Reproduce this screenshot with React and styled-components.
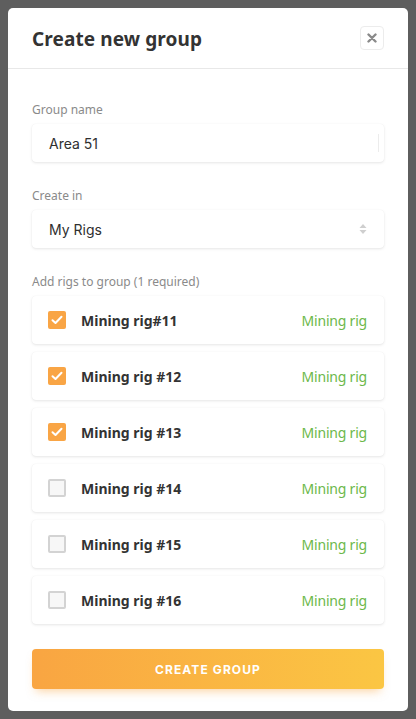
import React from "react";
import styled, { createGlobalStyle } from "styled-components";

const Global = createGlobalStyle`
  html, body { margin: 0; padding: 0; }
  body {
    background: #5e5e5e;
    font-family: "Noto Sans", "DejaVu Sans", sans-serif;
    -webkit-font-smoothing: antialiased;
  }
  * { box-sizing: border-box; }
`;

const Backdrop = styled.div`
  min-height: 719px;
  padding: 8px;
  background: #5e5e5e;
`;

const Modal = styled.div`
  width: 400px;
  height: 703px;
  background: #fff;
  border-radius: 5px;
  display: flex;
  flex-direction: column;
`;

const Header = styled.div`
  height: 61px;
  display: flex;
  align-items: center;
  justify-content: space-between;
  padding: 0 24px 0 24px;
  border-bottom: 1px solid #e8e8e8;
`;

const Title = styled.h2`
  margin: 0;
  font-size: 19px;
  font-weight: 700;
  color: #333;
  letter-spacing: 0.1px;
  margin-top: 1px;
`;

const CloseButton = styled.button`
  width: 24px;
  height: 24px;
  border: 1px solid #ececec;
  border-radius: 4px;
  background: #fff;
  display: flex;
  align-items: center;
  justify-content: center;
  padding: 0;
`;

const Body = styled.div`
  padding: 33px 24px 0 24px;
  display: flex;
  flex-direction: column;
`;

const Label = styled.div`
  font-size: 12px;
  color: #8a8a8a;
  line-height: 16px;
  margin-bottom: 6px;
`;

const Field = styled.div`
  height: 38px;
  background: #fff;
  border-radius: 4px;
  box-shadow: 0 1px 3px rgba(0, 0, 0, 0.1), 0 0 1px rgba(0, 0, 0, 0.06);
  display: flex;
  align-items: center;
  justify-content: space-between;
  padding: 0 16px 0 17px;
  margin-bottom: 26px;
  font-family: Inter, "Noto Sans", sans-serif;
  font-size: 14px;
  color: #2f2f2f;
`;

const Caret = styled.span`
  width: 1px;
  height: 18px;
  background: #ececec;
  margin-right: -11px;
`;

const RowList = styled.div`
  display: flex;
  flex-direction: column;
  gap: 8px;
`;

const Row = styled.label`
  height: 48px;
  background: #fff;
  border-radius: 4px;
  box-shadow: 0 1px 3px rgba(0, 0, 0, 0.1), 0 0 1px rgba(0, 0, 0, 0.06);
  display: flex;
  align-items: center;
  padding: 0 16px;
`;

const Check = styled.span`
  width: 18px;
  height: 18px;
  border-radius: 2px;
  flex: none;
  display: flex;
  align-items: center;
  justify-content: center;
  background: ${(p) => (p.$on ? "#f9a545" : "#f7f7f7")};
  border: ${(p) => (p.$on ? "none" : "2px solid #d3d3d3")};
`;

const RigName = styled.span`
  margin-left: 15px;
  flex: 1;
  font-size: 14px;
  font-weight: 700;
  color: #333;
`;

const RigType = styled.span`
  font-size: 14px;
  color: #6cb84a;
  letter-spacing: -0.2px;
  margin-right: 1px;
`;

const SubmitButton = styled.button`
  margin-top: 25px;
  height: 40px;
  width: 100%;
  border: none;
  border-radius: 4px;
  background: linear-gradient(90deg, #f9a542 0%, #fbc643 100%);
  box-shadow: 0 6px 10px -4px rgba(249, 165, 66, 0.5);
  color: #fff;
  font-family: Inter, "Noto Sans", sans-serif;
  font-weight: 700;
  font-size: 12px;
  letter-spacing: 1.1px;
  text-transform: uppercase;
`;

const rigs = [
  { name: "Mining rig#11", on: true },
  { name: "Mining rig #12", on: true },
  { name: "Mining rig #13", on: true },
  { name: "Mining rig #14", on: false },
  { name: "Mining rig #15", on: false },
  { name: "Mining rig #16", on: false },
];

export default function App() {
  return (
    <>
      <Global />
      <Backdrop>
        <Modal>
          <Header>
            <Title>Create new group</Title>
            <CloseButton aria-label="Close">
              <svg width="10" height="10" viewBox="0 0 10 10">
                <path d="M1.5 1.5 L8.5 8.5 M8.5 1.5 L1.5 8.5" stroke="#8a8a8a" strokeWidth="2.4" strokeLinecap="round" />
              </svg>
            </CloseButton>
          </Header>
          <Body>
            <Label>Group name</Label>
            <Field>
              <span>Area 51</span>
              <Caret />
            </Field>
            <Label>Create in</Label>
            <Field>
              <span>My Rigs</span>
              <svg width="8" height="12" viewBox="0 0 8 12" style={{ marginRight: 1 }}>
                <path d="M4 1 L7.5 5 H0.5 Z" fill="#cfcfcf" />
                <path d="M4 11 L7.5 7 H0.5 Z" fill="#cfcfcf" />
              </svg>
            </Field>
            <Label>Add rigs to group (1 required)</Label>
            <RowList>
              {rigs.map((r) => (
                <Row key={r.name}>
                  <Check $on={r.on}>
                    {r.on && (
                      <svg width="12" height="10" viewBox="0 0 12 10">
                        <path d="M1.5 5.2 L4.5 8 L10.5 1.8" fill="none" stroke="#fff" strokeWidth="2" strokeLinecap="round" strokeLinejoin="round" />
                      </svg>
                    )}
                  </Check>
                  <RigName>{r.name}</RigName>
                  <RigType>Mining rig</RigType>
                </Row>
              ))}
            </RowList>
            <SubmitButton>Create group</SubmitButton>
          </Body>
        </Modal>
      </Backdrop>
    </>
  );
}
